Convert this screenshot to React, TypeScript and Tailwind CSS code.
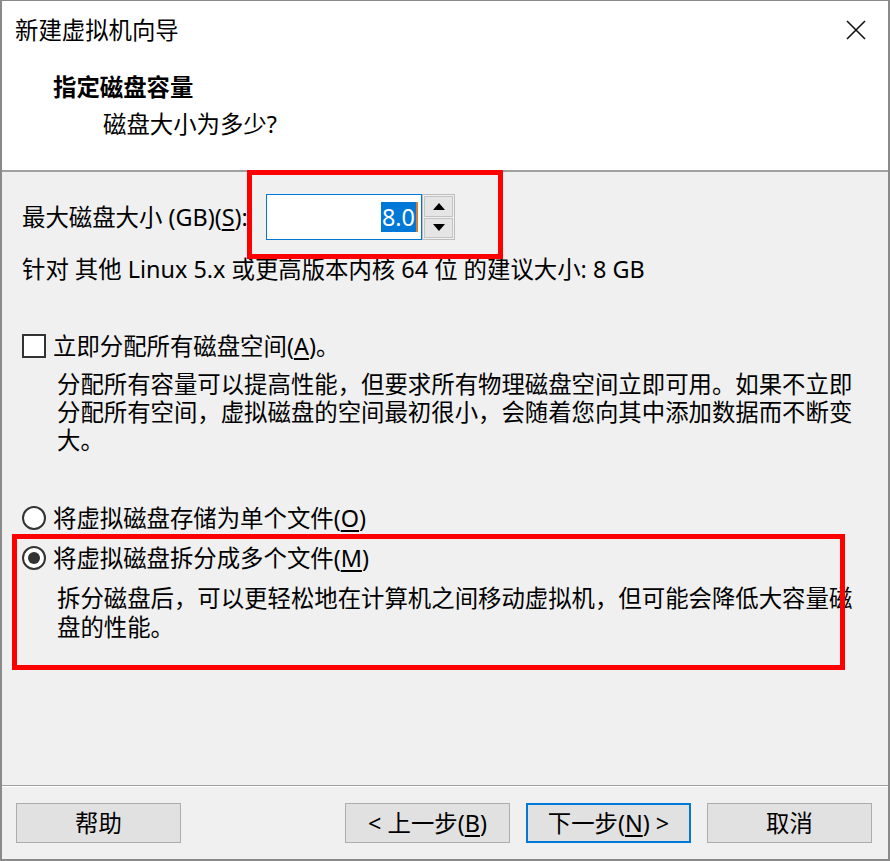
import React from "react";

const U = ({ c }: { c: string }) => <span className="underline underline-offset-[3px]">{c}</span>;

function Btn({ children, primary }: { children: React.ReactNode; primary?: boolean }) {
  return (
    <div
      className={
        "w-[165px] h-[40px] flex items-center justify-center bg-[#e1e1e1] text-black " +
        (primary ? "border-2 border-[#0078d7]" : "border border-[#adadad]")
      }
    >
      {children}
    </div>
  );
}

export default function App() {
  return (
    <div className="relative w-[890px] h-[861px] bg-[#f0f0f0] text-black font-['Noto_Sans','Noto_Sans_CJK_SC',sans-serif] text-[23.4px] leading-[28px] border-l-2 border-r-2 border-t border-b-2 border-[#8a8a8a] flex flex-col overflow-hidden">
      {/* Header */}
      <div className="bg-white h-[171px] border-b-2 border-[#a0a0a0] shrink-0 relative">
        <div className="pl-[13px] pt-[15px] h-[43px]">新建虚拟机向导</div>
        <svg className="absolute left-[844px] top-[19px]" width="20" height="20" viewBox="0 0 20 20">
          <path d="M1 1 L19 19 M19 1 L1 19" stroke="#111" strokeWidth="1.6" fill="none" />
        </svg>
        <div className="pl-[51px] mt-[29px] font-bold">指定磁盘容量</div>
        <div className="pl-[101px] mt-[9px]">磁盘大小为多少?</div>
      </div>

      {/* Body */}
      <div className="flex-1 pl-[20px] pt-[22px]">
        <div className="flex items-center h-[46px]">
          <div className="w-[244px] shrink-0">
            最大磁盘大小 (GB)(<U c="S" />):
          </div>
          <div className="w-[156px] h-[46px] bg-white border border-[#0078d7] flex items-center justify-end pr-[3px]">
            <span className="bg-[#0078d7] text-white leading-[30px] px-[1px]">8.0</span>
            <span className="w-[2px] h-[30px] bg-[#e07b2a]" />
          </div>
          <div className="w-[33px] h-[46px] border border-[#bdbdbd] bg-[#f0f0f0] flex flex-col p-[1px] gap-[1px]">
            <div className="flex-1 bg-[#e5e5e5] border border-[#c4c4c4] flex items-center justify-center">
              <svg width="12" height="7" viewBox="0 0 12 7"><path d="M6 0 L12 7 L0 7 Z" fill="#000" /></svg>
            </div>
            <div className="flex-1 bg-[#e5e5e5] border border-[#c4c4c4] flex items-center justify-center">
              <svg width="12" height="7" viewBox="0 0 12 7"><path d="M0 0 L12 0 L6 7 Z" fill="#000" /></svg>
            </div>
          </div>
        </div>
        <div className="mt-[15px]">针对 其他 Linux 5.x 或更高版本内核 64 位 的建议大小: 8 GB</div>

        <div className="mt-[49px] flex items-center h-[28px]">
          <div className="w-[24px] h-[24px] bg-white border-2 border-[#333] shrink-0" />
          <div className="ml-[7px]">
            立即分配所有磁盘空间(<U c="A" />)。
          </div>
        </div>
        <div className="mt-[10px] pl-[35px]">
          <div>分配所有容量可以提高性能，但要求所有物理磁盘空间立即可用。如果不立即</div>
          <div>分配所有空间，虚拟磁盘的空间最初很小，会随着您向其中添加数据而不断变</div>
          <div>大。</div>
        </div>

        <div className="mt-[50px] flex items-center h-[28px]">
          <div className="w-[24px] h-[24px] rounded-full bg-white border-2 border-[#333] shrink-0" />
          <div className="ml-[7px]">
            将虚拟磁盘存储为单个文件(<U c="O" />)
          </div>
        </div>
        <div className="mt-[12px] flex items-center h-[28px]">
          <div className="w-[24px] h-[24px] rounded-full bg-white border-2 border-[#333] shrink-0 flex items-center justify-center">
            <div className="w-[12px] h-[12px] rounded-full bg-[#333]" />
          </div>
          <div className="ml-[7px]">
            将虚拟磁盘拆分成多个文件(<U c="M" />)
          </div>
        </div>
        <div className="mt-[12px] pl-[35px] leading-[29px]">
          <div>拆分磁盘后，可以更轻松地在计算机之间移动虚拟机，但可能会降低大容量磁</div>
          <div>盘的性能。</div>
        </div>
      </div>

      {/* Footer */}
      <div className="shrink-0 border-t border-[#a0a0a0]">
        <div className="border-t border-white h-[73px] flex items-start pt-[16px] pl-[14px] pr-[16px] justify-between">
          <Btn>帮助</Btn>
          <div className="flex gap-[16px]">
            <Btn>
              &lt; 上一步(<U c="B" />)
            </Btn>
            <Btn primary>
              下一步(<U c="N" />) &gt;
            </Btn>
            <Btn>取消</Btn>
          </div>
        </div>
      </div>

      {/* Annotation overlays */}
      <div className="absolute left-[245px] top-[169px] w-[256px] h-[89px] border-[5px] border-[#ff0000] pointer-events-none" />
      <div className="absolute left-[10px] top-[533px] w-[833px] h-[136px] border-[5px] border-[#ff0000] pointer-events-none" />
    </div>
  );
}
